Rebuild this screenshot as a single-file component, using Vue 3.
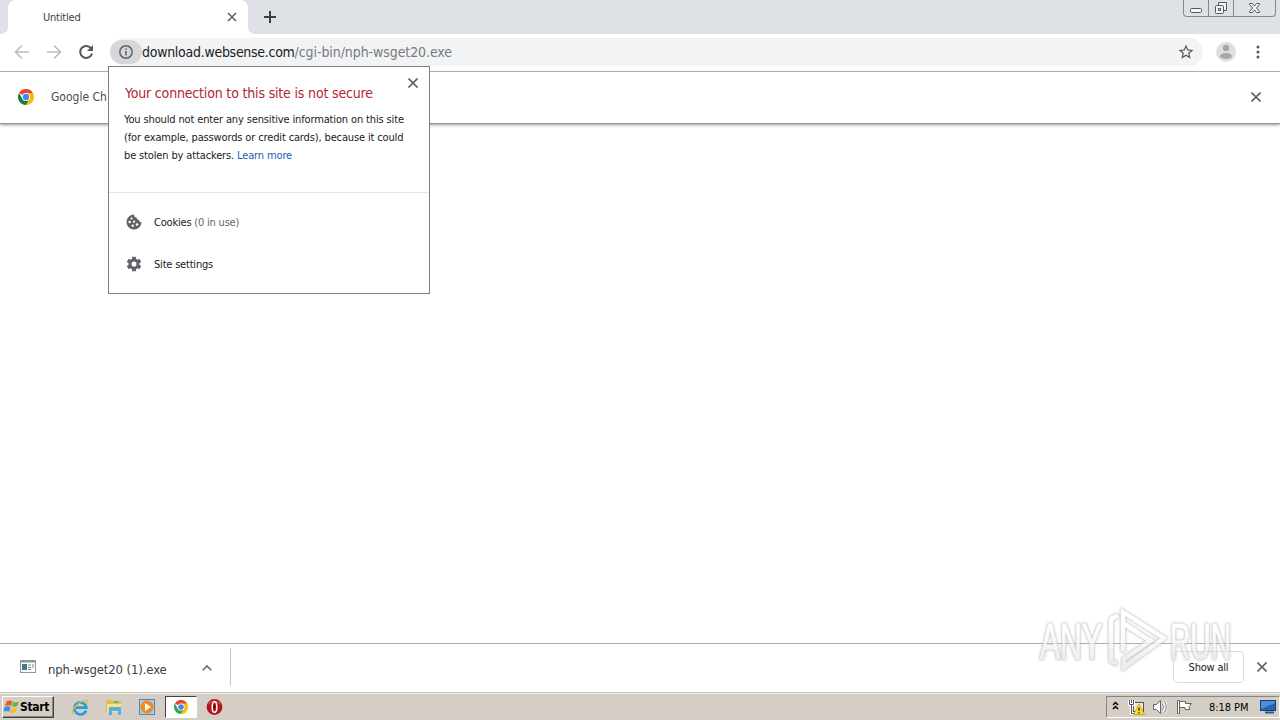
<template>
  <div class="screen">
    <!-- tab strip -->
    <header class="tab-strip">
      <div class="prev-tab"></div>
      <div class="tab">
        <span class="tab-title">Untitled</span>
        <svg class="tab-close" viewBox="0 0 10 10"><path d="M1 1l8 8M9 1l-8 8" /></svg>
      </div>
      <div class="strip-rest">
        <svg class="new-tab" viewBox="0 0 12 12"><path d="M6 0v12M0 6h12" /></svg>
        <div class="window-controls">
          <div class="control">
            <svg width="14" height="6" viewBox="0 0 14 6"><rect x="1.5" y=".5" width="11" height="4" rx="1" /></svg>
          </div>
          <div class="control">
            <svg width="14" height="14" viewBox="0 0 14 14">
              <path d="M4.500 4.500v-3h8v8h-3" />
              <rect x="1.500" y="4.500" width="8" height="8" rx="1" />
              <rect x="4.500" y="7.500" width="2" height="2" />
            </svg>
          </div>
          <div class="control wide">
            <svg width="13" height="12" viewBox="0 0 13 12">
              <path d="M1.500 1.500h3l2 2.500 2-2.500h3v1L8.500 6l3 3.500v1h-3l-2-2.500-2 2.500h-3v-1l3-3.500-3-3.500z" />
            </svg>
          </div>
        </div>
      </div>
    </header>

    <!-- toolbar -->
    <div class="toolbar">
      <svg class="nav-icon disabled" viewBox="0 0 16 16"><path d="M15 8H2M8 1.500L1.500 8 8 14.500" /></svg>
      <svg class="nav-icon disabled" viewBox="0 0 16 16"><path d="M1 8h13M8 1.500L14.500 8 8 14.500" /></svg>
      <svg class="nav-icon" viewBox="0 0 16 16">
        <path d="M13.300 4.700A6 6 0 1 0 14 9.500" />
        <path class="solid" d="M15 1v6H9z" />
      </svg>
      <div class="omnibox">
        <div class="site-info">
          <svg viewBox="0 0 14 14"><circle cx="7" cy="7" r="6.200" /><path d="M7 6v4.500M7 3.500v1.500" /></svg>
        </div>
        <span class="url"><span class="host">download.websense.com</span>/cgi-bin/nph-wsget20.exe</span>
        <svg class="star" viewBox="0 0 24 24">
          <path d="M22 9.240l-7.190-.620L12 2 9.190 8.630 2 9.240l5.460 4.730L5.820 21 12 17.270 18.180 21l-1.630-7.030L22 9.240zM12 15.400l-3.760 2.270 1-4.280-3.320-2.880 4.380-.380L12 6.100l1.710 4.040 4.380.380-3.320 2.880 1 4.280L12 15.400z" />
        </svg>
      </div>
      <svg class="avatar" viewBox="0 0 20 20">
        <circle class="face" cx="10" cy="10" r="10" />
        <circle cx="10" cy="6" r="3.200" />
        <ellipse cx="10" cy="14" rx="6" ry="3" />
      </svg>
      <svg class="menu-dots" viewBox="0 0 4 14">
        <circle cx="2" cy="2" r="1.500" /><circle cx="2" cy="7" r="1.500" /><circle cx="2" cy="12" r="1.500" />
      </svg>
    </div>

    <!-- infobar -->
    <div class="infobar">
      <svg class="chrome-icon" viewBox="0 0 48 48">
        <path fill="#ea4335" d="M24 24L3.200 12A24 24 0 0 1 44.800 12z" />
        <path fill="#fbbc05" d="M24 24V12h20.800A24 24 0 0 1 24 48l10.400-18z" />
        <path fill="#188038" d="M24 48A24 24 0 0 1 3.200 12l10.400 18L24 35l10.400-5z" />
        <circle cx="24" cy="24" r="12" fill="#fff" />
        <circle cx="24" cy="24" r="9.500" fill="#4285f4" />
      </svg>
      <span class="infobar-text">Google Ch</span>
      <svg class="close" viewBox="0 0 10 10"><path d="M.5.5l9 9M9.500.5l-9 9" /></svg>
    </div>

    <main class="page"></main>

    <!-- download shelf -->
    <div class="shelf">
      <div class="download">
        <svg class="exe-icon" viewBox="0 0 16 13">
          <rect x=".5" y=".5" width="15" height="12" fill="#fff" stroke="#8d9699" />
          <path d="M1 1.500h14" stroke="#8d9699" stroke-width="2" />
          <rect x="2" y="4" width="5" height="6" fill="#397f88" />
          <path d="M8 5h3M8 7.500h3M8 9.500h3M13 4v4" stroke="#718890" />
        </svg>
        <span class="file-name">nph-wsget20 (1).exe</span>
        <svg class="chevron" viewBox="0 0 10 6"><path d="M.7 5.300L5 1l4.300 4.300" /></svg>
      </div>
      <button class="show-all">Show all</button>
      <svg class="close" viewBox="0 0 10 10"><path d="M.5.5l9 9M9.500.5l-9 9" /></svg>
    </div>

    <!-- taskbar -->
    <footer class="taskbar">
      <div class="start">
        <svg viewBox="0 0 18 16">
          <path fill="#e9572b" d="M4 2q3-2 6 0L8.500 7Q5.500 5.500 2 7z" />
          <path fill="#6fb52c" d="M11 2.500q3 1.500 6-.5l-2 5q-3 1.500-5.500 0z" />
          <path fill="#3c8fdc" d="M1.700 8q3-1.500 6.300 0l-1.500 5q-3-1.500-6 0z" />
          <path fill="#f5bd27" d="M9 8.500q3 1.500 6 0l-2 5q-3 2-5.500 0z" />
        </svg>
        <span>Start</span>
      </div>
      <div class="quick">
        <svg viewBox="0 0 18 18">
          <path d="M15 12.500A6 6 0 1 1 15.300 9.700H5" fill="none" stroke="#2e9bd9" stroke-width="2.700" />
          <path d="M2 16C-1 12.500 9 1.500 16 2.500q1.500.8.2 3" fill="none" stroke="#e4b935" stroke-width="1.300" />
        </svg>
      </div>
      <div class="quick">
        <svg viewBox="0 0 18 18">
          <path fill="#e5bd52" d="M1 2h6l1 1h8v11H1z" />
          <path fill="#f9e08c" d="M2 6h14v8H2z" />
          <path fill="#5cb85c" d="M9 3h4v2H9z" />
          <path fill="#58aee0" d="M4 9h12v8h-3v-4H7v4H4z" />
        </svg>
      </div>
      <div class="quick">
        <svg viewBox="0 0 18 18">
          <rect x="1.500" y="1.500" width="15" height="15" fill="#a5cbea" stroke="#5088bd" />
          <circle cx="9" cy="9" r="6.500" fill="#f28918" />
          <path fill="#fff" d="M7 5l6 4-6 4z" />
        </svg>
      </div>
      <div class="quick active">
        <svg class="small-chrome" viewBox="0 0 48 48">
          <path fill="#ea4335" d="M24 24L3.200 12A24 24 0 0 1 44.800 12z" />
          <path fill="#fbbc05" d="M24 24V12h20.800A24 24 0 0 1 24 48l10.400-18z" />
          <path fill="#34a853" d="M24 48A24 24 0 0 1 3.200 12l10.400 18L24 35l10.400-5z" />
          <circle cx="24" cy="24" r="12" fill="#fff" />
          <circle cx="24" cy="24" r="9.500" fill="#4285f4" />
        </svg>
      </div>
      <div class="quick">
        <svg viewBox="0 0 18 18">
          <circle cx="8.500" cy="9" r="7.900" fill="#b5141b" />
          <path d="M2.500 6q6-6 12 0" fill="none" stroke="#d96b6b" />
          <ellipse cx="8.500" cy="9" rx="2.300" ry="5.300" fill="#8b0c12" stroke="#fff" stroke-width="1.600" />
        </svg>
      </div>
      <div class="tray">
        <svg class="tray-expand" viewBox="0 0 7 9"><path d="M1 4l2.500-2.500L6 4M1 8l2.500-2.500L6 8" /></svg>
        <svg class="tray-network" viewBox="0 0 17 16">
          <rect x="5.500" y="3.500" width="10" height="9" fill="#e8e8e4" stroke="#555" />
          <path d="M1.500 1v4.500h4V1M3.500 1v3M3.500 6v8.500h4" fill="none" stroke="#fff" stroke-width="3" />
          <path d="M1.500 1v4.500h4V1M3.500 1v3M3.500 6v8.500h4" fill="none" stroke="#555" />
          <path d="M11 5l5.500 10.500h-11z" fill="#ffdd20" stroke="#b99500" stroke-width=".7" />
          <path d="M11 8.500v3.500M11 13v1.500" stroke="#222" stroke-width="1.200" />
        </svg>
        <svg class="tray-sound" viewBox="0 0 17 16">
          <path d="M1.500 5.500h3l4-4v13l-4-4h-3z" fill="#fff" stroke="#666" />
          <path d="M10.500 5q2 3 0 6M12.500 2.500q3.500 5.500 0 11" fill="none" stroke="#fff" stroke-width="2.500" />
          <path d="M10.500 5q2 3 0 6M12.500 2.500q3.500 5.500 0 11" fill="none" stroke="#777" />
        </svg>
        <svg class="tray-flag" viewBox="0 0 17 16">
          <path d="M1.500 1.500h2v13h-2zM3.500 2.500h6v2h6l-2.500 3 1 3H9v-2H3.500z" fill="#fff" stroke="#666" />
        </svg>
        <span class="clock">8:18 PM</span>
        <svg class="tray-desktop" viewBox="0 0 16 14">
          <rect x=".5" y=".5" width="15" height="10" fill="#2367b4" stroke="#153e77" />
          <path d="M1 1h14v2L1 9z" fill="#4b91d8" />
          <path d="M5 12.500h9" stroke="#315581" stroke-width="2" />
        </svg>
      </div>
    </footer>

    <!-- page info bubble -->
    <section class="bubble">
      <svg class="bubble-close" viewBox="0 0 10 10"><path d="M.5.5l9 9M9.500.5l-9 9" /></svg>
      <div class="bubble-main">
        <h1>Your connection to this site is not secure</h1>
        <p>
          <span class="line">You should not enter any sensitive information on this site</span>
          <span class="line">(for example, passwords or credit cards), because it could</span>
          <span class="line">be stolen by attackers. <a>Learn more</a></span>
        </p>
      </div>
      <div class="bubble-list">
        <div class="bubble-row">
          <svg viewBox="0 0 16 16">
            <path fill="#5f6368" d="M8 .5A7.500 7.500 0 1 0 15.500 8.200Q13 8.500 13 6q-2.500.2-2.400-2.400Q8 3.500 8 .5z" />
            <g fill="#fff">
              <circle cx="5.500" cy="4.500" r="1.100" /><circle cx="3.700" cy="8" r="1.200" />
              <circle cx="8" cy="7.700" r="1.100" /><circle cx="6.700" cy="11.800" r="1.200" /><circle cx="11" cy="10.500" r="1.300" />
            </g>
          </svg>
          <span>Cookies <em>(0 in use)</em></span>
        </div>
        <div class="bubble-row">
          <svg viewBox="1 1 22 22">
            <path fill="#5f6368" d="M19.430 12.980c.040-.320.070-.640.070-.980s-.030-.660-.070-.980l2.110-1.650c.190-.150.240-.420.120-.640l-2-3.460c-.120-.220-.390-.300-.610-.220l-2.490 1c-.520-.400-1.080-.730-1.690-.980l-.380-2.650C14.460 2.180 14.250 2 14 2h-4c-.250 0-.460.180-.490.420l-.380 2.650c-.610.250-1.170.590-1.690.980l-2.490-1c-.230-.090-.490 0-.610.220l-2 3.460c-.130.220-.070.490.120.640l2.110 1.650c-.040.320-.070.650-.070.980s.030.660.070.980l-2.110 1.650c-.190.150-.240.420-.120.640l2 3.460c.120.220.390.300.610.220l2.490-1c.520.400 1.080.730 1.690.980l.380 2.650c.030.240.240.420.490.420h4c.250 0 .460-.180.490-.420l.380-2.650c.610-.250 1.170-.590 1.690-.980l2.490 1c.230.090.490 0 .610-.220l2-3.460c.120-.220.070-.490-.120-.640l-2.110-1.650zM12 15.500a3.500 3.500 0 1 1 0-7 3.500 3.500 0 0 1 0 7z" />
          </svg>
          <span>Site settings</span>
        </div>
      </div>
    </section>

    <!-- watermark -->
    <svg class="watermark" viewBox="0 0 200 66">
      <defs>
        <linearGradient id="mark-fade" gradientUnits="userSpaceOnUse" x1="0" y1="0" x2="0" y2="66">
          <stop offset=".35" stop-color="#fff" />
          <stop offset=".8" stop-color="#e8e8e8" />
        </linearGradient>
      </defs>
      <g class="mark-text">
        <text x="4" y="52" textLength="62" lengthAdjust="spacingAndGlyphs">ANY</text>
        <text x="134" y="52" textLength="61" lengthAdjust="spacingAndGlyphs">RUN</text>
      </g>
      <g class="mark-logo">
        <path d="M81 57l-6-3V12l7-4" />
        <path d="M87 45V5l41 26-40 29v-8l29-20" />
        <path d="M87 16l29 19" />
      </g>
    </svg>
  </div>
</template>

<script setup>
</script>

<style>
body {
  margin: 0;
  overflow: hidden;
}
</style>

<style scoped>
.screen {
  position: relative;
  width: 1280px;
  height: 720px;
  display: flex;
  flex-direction: column;
  background: #fff;
  font-family: Tahoma, "DejaVu Sans Condensed", "DejaVu Sans", sans-serif;
  font-stretch: condensed;
  font-size: 11px;
  color: #202124;
  overflow: hidden;
  white-space: nowrap;
}

svg {
  display: block;
  flex: none;
}

.tab-strip {
  height: 34px;
  display: flex;
  background: #fff;
}

.prev-tab {
  width: 8px;
  background: #dee1e6;
  border-bottom-right-radius: 7px;
}

.tab {
  box-sizing: border-box;
  width: 240px;
  display: flex;
  align-items: center;
  justify-content: space-between;
  padding: 0 11px 0 35px;
  background: linear-gradient(#dee1e6, #dee1e6) top / 100% 8px no-repeat;
  position: relative;
}

.tab::before {
  content: "";
  position: absolute;
  inset: 0;
  background: #fff;
  border-radius: 8px 8px 0 0;
}

.tab-title {
  position: relative;
  color: #3c4043;
  letter-spacing: -0.2px;
}

.tab-close {
  position: relative;
  width: 10px;
  height: 10px;
  stroke: #5f6368;
  stroke-width: 1.6;
}

.strip-rest {
  flex: 1;
  display: flex;
  align-items: flex-start;
  justify-content: space-between;
  padding: 0 4px 0 16px;
  background: #dee1e6;
  border-bottom-left-radius: 7px;
}

.new-tab {
  width: 12px;
  height: 12px;
  margin-top: 11px;
  stroke: #3c4043;
  stroke-width: 2;
}

.window-controls {
  box-sizing: border-box;
  height: 17px;
  display: flex;
  border: 1px solid #85898f;
  border-top: 0;
  border-radius: 0 0 4px 4px;
}

.control {
  width: 24px;
  display: flex;
  align-items: center;
  justify-content: center;
  border-right: 1px solid #85898f;
}

.control:first-child svg {
  margin-top: 5px;
}

.control.wide {
  width: 41px;
  border-right: 0;
}

.control svg {
  fill: #f4f5f7;
  stroke: #555960;
}

.toolbar {
  box-sizing: border-box;
  height: 38px;
  display: flex;
  align-items: center;
  padding: 0 0 2px 14px;
  border-bottom: 1px solid #b2b4b6;
}

.nav-icon {
  width: 16px;
  height: 16px;
  margin-right: 16px;
  fill: none;
  stroke: #54575b;
  stroke-width: 2;
}

.nav-icon.disabled {
  stroke: #babcbe;
  stroke-width: 1.6;
}

.nav-icon .solid {
  fill: #54575b;
  stroke: none;
}

.omnibox {
  width: 1093px;
  height: 28px;
  display: flex;
  align-items: center;
  border-radius: 14px;
  background: #f1f3f4;
}

.site-info {
  width: 32px;
  height: 24px;
  display: flex;
  align-items: center;
  justify-content: center;
  border-radius: 12px;
  background: #d5d7d8;
}

.site-info svg {
  width: 14px;
  height: 14px;
  fill: none;
  stroke: #5f6368;
  stroke-width: 1.5;
}

.url {
  flex: 1;
  font-size: 14px;
  letter-spacing: -0.08px;
  color: #777b7f;
}

.host {
  letter-spacing: -0.28px;
  color: #202124;
}

.star {
  width: 18px;
  height: 18px;
  margin-right: 8px;
  fill: #54575b;
}

.avatar {
  width: 20px;
  height: 20px;
  margin-left: 13px;
  fill: #a5a7aa;
}

.avatar .face {
  fill: #dedfe0;
}

.menu-dots {
  width: 4px;
  height: 14px;
  margin-left: 20px;
  fill: #54575b;
}

.infobar {
  box-sizing: border-box;
  height: 52px;
  display: flex;
  align-items: center;
  padding: 0 19px 1px 18px;
  border-bottom: 1px solid #949494;
  box-shadow: 0 1px 3px #999;
}

.chrome-icon {
  width: 16px;
  height: 16px;
}

.infobar-text {
  margin: 0 auto 0 17px;
  font-size: 12px;
  color: #4b4d50;
}

.close {
  width: 10px;
  height: 10px;
  stroke: #5f6368;
  stroke-width: 1.6;
}

.page {
  flex: 1;
}

.shelf {
  box-sizing: border-box;
  height: 49px;
  display: flex;
  align-items: center;
  padding: 0 13px 2px 0;
  border-top: 1px solid #adadad;
}

.download {
  box-sizing: border-box;
  width: 231px;
  height: 38px;
  display: flex;
  align-items: center;
  padding: 0 18px 0 20px;
  margin-right: auto;
  border-right: 1px solid #c6c6c6;
}

.exe-icon {
  width: 16px;
  height: 13px;
  margin-bottom: 1px;
}

.file-name {
  flex: 1;
  margin: 4px 0 0 12px;
  font-size: 13px;
  letter-spacing: -0.12px;
  color: #3c4043;
}

.chevron {
  width: 10px;
  height: 6px;
  margin-top: 1px;
  fill: none;
  stroke: #5f6368;
  stroke-width: 1.5;
}

.show-all {
  box-sizing: border-box;
  width: 71px;
  height: 32px;
  padding: 0;
  margin-right: 13px;
  border: 1px solid #dadce0;
  border-radius: 4px;
  background: #fff;
  font: inherit;
  letter-spacing: -0.2px;
  color: #202124;
}

.taskbar {
  box-sizing: border-box;
  height: 28px;
  display: flex;
  align-items: center;
  padding: 0 0 0 2px;
  border-top: 1px solid #c8c4be;
  background: #d5cec6;
  box-shadow: inset 0 1px #f3f0ec;
}

.start {
  box-sizing: border-box;
  width: 52px;
  height: 22px;
  display: flex;
  align-items: center;
  gap: 0;
  margin-right: 10px;
  border: 1px solid;
  border-color: #fff #47433e #47433e #fff;
  box-shadow: inset -1px -1px #8c857c;
  font-size: 12px;
  font-weight: 700;
  letter-spacing: -0.35px;
  color: #000;
}

.start svg {
  width: 17px;
  height: 16px;
}

.quick {
  box-sizing: border-box;
  width: 32px;
  height: 22px;
  display: flex;
  align-items: center;
  justify-content: center;
  margin-right: 1.7px;
}

.quick svg {
  width: 18px;
  height: 18px;
}

.quick.active {
  border: 1px solid;
  border-color: #47433e #fff #fff #47433e;
  background: #fff;
}

.quick .small-chrome {
  width: 14px;
  height: 14px;
}

.tray {
  box-sizing: border-box;
  width: 174px;
  height: 22px;
  display: flex;
  align-items: center;
  padding-left: 5px;
  margin-left: auto;
  border: 1px solid;
  border-color: #8c857c #fff #fff #8c857c;
}

.tray-expand {
  width: 7px;
  height: 9px;
  margin-bottom: 3px;
  fill: none;
  stroke: #000;
  stroke-width: 1.5;
}

.tray-network,
.tray-sound,
.tray-flag {
  width: 17px;
  height: 16px;
  margin-left: 9px;
}

.tray-sound {
  margin-left: 7px;
}

.tray-flag {
  margin-left: 7px;
}

.clock {
  width: 40px;
  margin: 1px 0 0 16px;
  letter-spacing: -0.05px;
  color: #000;
}

.tray-desktop {
  width: 16px;
  height: 14px;
  margin-left: 11px;
}

.bubble {
  box-sizing: border-box;
  position: absolute;
  left: 108px;
  top: 66px;
  width: 322px;
  height: 228px;
  border: 1px solid #7d7f81;
  background: #fff;
}

.bubble-close {
  position: absolute;
  top: 11px;
  right: 11px;
  width: 10px;
  height: 10px;
  stroke: #5f6368;
  stroke-width: 1.7;
}

.bubble-main {
  box-sizing: border-box;
  height: 126px;
  padding: 16px 0 0 15px;
  border-bottom: 1px solid #e3e4e5;
}

.bubble-main h1 {
  margin: 0 0 0 1px;
  font-size: 14px;
  font-weight: 400;
  line-height: 20px;
  letter-spacing: -0.17px;
  color: #b3262d;
}

.bubble-main p {
  margin: 8px 0 0;
  line-height: 18px;
  color: #202124;
}

.line {
  display: block;
  letter-spacing: -0.14px;
}

.bubble-main a {
  color: #1a62b7;
}

.bubble-list {
  padding-top: 8px;
}

.bubble-row {
  height: 42px;
  display: flex;
  align-items: center;
  gap: 12px;
  padding-left: 17px;
  letter-spacing: -0.2px;
}

.bubble-row svg {
  width: 16px;
  height: 16px;
}

.bubble-row em {
  font-style: normal;
  color: #5f6368;
}

.watermark {
  position: absolute;
  left: 1036px;
  top: 607px;
  width: 200px;
  height: 66px;
  opacity: 0.75;
  filter: drop-shadow(0 0 1px #aaa) drop-shadow(0 0 1px #ccc);
}

.mark-text {
  fill: url(#mark-fade);
  stroke: url(#mark-fade);
  stroke-width: 1.2;
  font-family: "Liberation Sans", sans-serif;
  font-size: 50px;
}

.mark-logo {
  fill: none;
  stroke: url(#mark-fade);
  stroke-width: 4.500;
}
</style>
